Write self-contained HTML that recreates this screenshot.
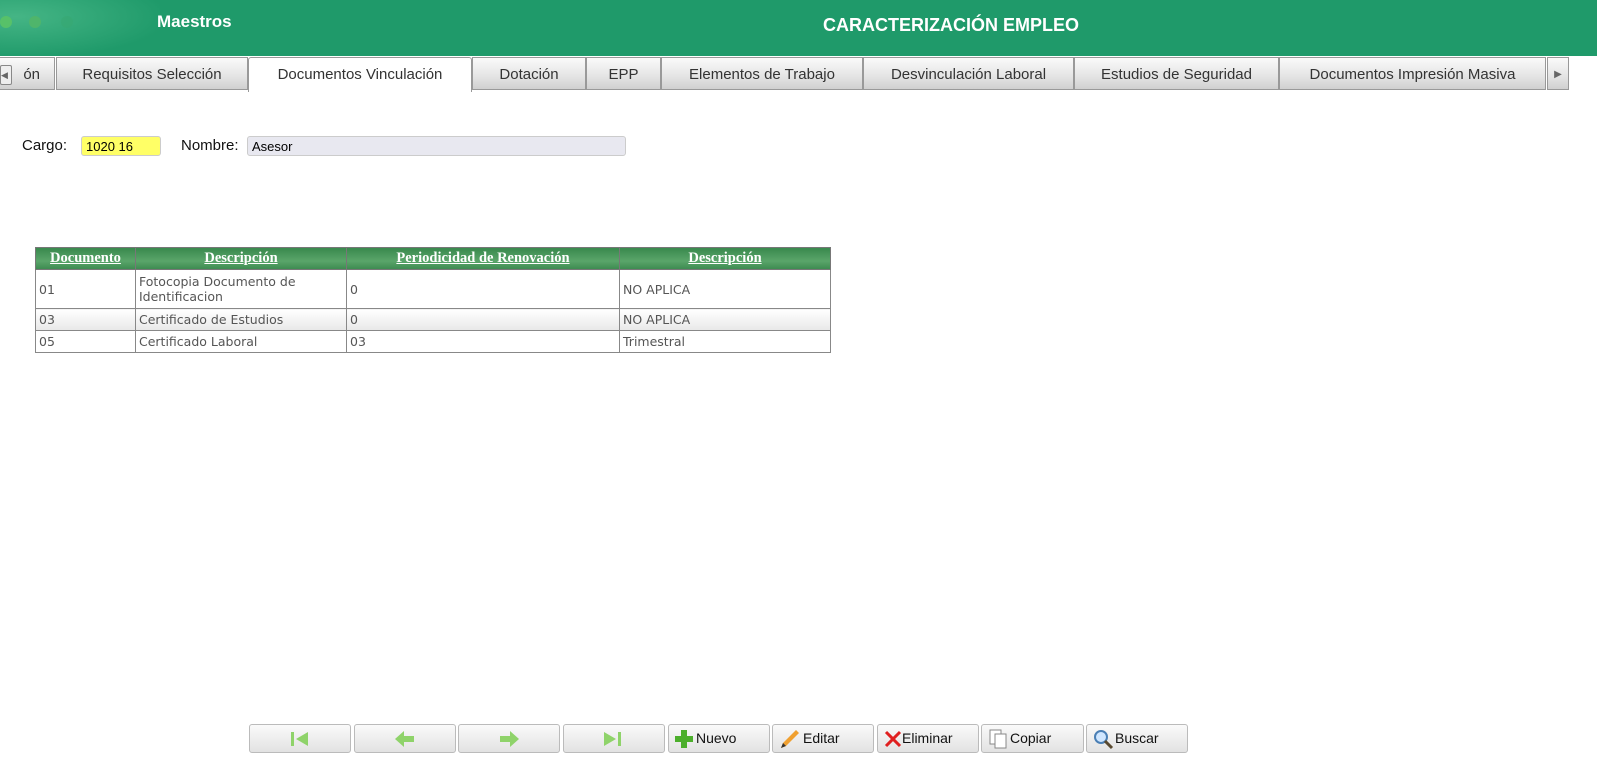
<!DOCTYPE html><html><head><meta charset="utf-8"><style>
body{margin:0;width:1597px;height:769px;background:#fff;font-family:"Liberation Sans",sans-serif;position:relative;overflow:hidden}
.hdr{position:absolute;left:0;top:0;width:1597px;height:56px;background:#1f9a6a}
.hdr .glow{position:absolute;left:0;top:0;width:160px;height:56px;background:radial-gradient(ellipse at 10% 30%,#45b585,#1f9a6a 75%)}
.dot{position:absolute;top:16px;width:12px;height:12px;border-radius:50%}
.t{position:absolute;color:#fff;font-weight:bold}
.tabs{position:absolute;top:57px;left:0;height:35px;width:1597px}
.tab{position:absolute;top:0;height:33px;border:1px solid #999;background:linear-gradient(#fafafa,#e4e4e4 60%,#d0d0d0);box-sizing:border-box;font-size:15px;color:#333;text-align:center;line-height:33px}
.tab.a{background:#fff;border-bottom:none;height:35px;border-radius:3px 3px 0 0}
.lbl{position:absolute;font-size:15px;color:#111}
.in{position:absolute;box-sizing:border-box;border:1px solid #ccc;border-radius:3px;font-size:13px;padding-left:4px;line-height:19px;height:20px}
table{position:absolute;left:35px;top:247px;border-collapse:collapse;width:796px;font-size:13px;color:#555;font-family:"DejaVu Sans",sans-serif}
th{background:linear-gradient(#3a8a4e,#5aa56a 60%,#3c8a50);color:#fff;text-decoration:underline;height:21px;font-size:13px;border:1px solid #777;padding:0;font-family:"Liberation Serif",serif;font-size:14.5px}
td{border:1px solid #888;padding:0 3px;height:21px;font-size:12.5px}
tr.g td{background:linear-gradient(#fff,#e8e8e8)}
.b{position:absolute;top:724px;height:29px;box-sizing:border-box;border:1px solid #bbb;border-radius:3px;background:linear-gradient(#fafafa,#e2e2e2);font-size:14px;color:#111;line-height:27px}
.b svg{position:absolute}
</style></head><body>
<div class="hdr"><div class="glow"></div>
<div class="dot" style="left:0;background:#57c169"></div><div class="dot" style="left:29px;background:#4fb56b"></div><div class="dot" style="left:61px;background:#38a874;opacity:.7"></div>
<div class="t" style="left:157px;top:12px;font-size:17px">Maestros</div>
<div class="t" style="left:823px;top:15px;font-size:18px">CARACTERIZACIÓN EMPLEO</div></div>
<div class="tabs">
<div class="tab" style="left:-2px;width:57px;text-align:right;padding-right:14px">ón</div>
<div style="position:absolute;left:0;top:8px;width:10px;height:18px;border:1px solid #888;border-radius:2px;background:#eee;font-size:9px;line-height:18px;color:#666">◀</div>
<div class="tab" style="left:56px;width:192px">Requisitos Selección</div>
<div class="tab a" style="left:248px;width:224px">Documentos Vinculación</div>
<div class="tab" style="left:472px;width:114px">Dotación</div>
<div class="tab" style="left:586px;width:75px">EPP</div>
<div class="tab" style="left:661px;width:202px">Elementos de Trabajo</div>
<div class="tab" style="left:863px;width:211px">Desvinculación Laboral</div>
<div class="tab" style="left:1074px;width:205px">Estudios de Seguridad</div>
<div class="tab" style="left:1279px;width:267px">Documentos Impresión Masiva</div>
<div class="tab" style="left:1547px;width:22px;font-size:10px;color:#666">▶</div>
</div>
<div class="lbl" style="left:22px;top:137px">Cargo:</div>
<div class="in" style="left:81px;top:136px;width:80px;background:#ffff66">1020 16</div>
<div class="lbl" style="left:181px;top:137px">Nombre:</div>
<div class="in" style="left:247px;top:136px;width:379px;background:#e8e8f0">Asesor</div>
<table>
<tr><th style="width:99px">Documento</th><th style="width:210px">Descripción</th><th style="width:272px">Periodicidad de Renovación</th><th>Descripción</th></tr>
<tr><td style="height:38px">01</td><td>Fotocopia Documento de Identificacion</td><td>0</td><td>NO APLICA</td></tr>
<tr class="g"><td>03</td><td>Certificado de Estudios</td><td>0</td><td>NO APLICA</td></tr>
<tr><td>05</td><td>Certificado Laboral</td><td>03</td><td>Trimestral</td></tr>
</table>
<div class="b" style="left:249px;width:102px"><svg style="left:40px;top:5px" width="20" height="18"><rect x="1" y="2" width="3" height="14" fill="#8fd36a"/><path d="M18 2L6 9L18 16Z" fill="#8fd36a"/></svg></div>
<div class="b" style="left:354px;width:102px"><svg style="left:38px;top:5px" width="24" height="18"><path d="M2 9L11 1V6H21V12H11V17Z" fill="#8fd36a"/></svg></div>
<div class="b" style="left:458px;width:102px"><svg style="left:38px;top:5px" width="24" height="18"><path d="M22 9L13 1V6H3V12H13V17Z" fill="#8fd36a"/></svg></div>
<div class="b" style="left:563px;width:102px"><svg style="left:38px;top:5px" width="20" height="18"><path d="M2 2L14 9L2 16Z" fill="#8fd36a"/><rect x="16" y="2" width="3" height="14" fill="#8fd36a"/></svg></div>
<div class="b" style="left:668px;width:102px;padding-left:27px"><svg style="left:4px;top:4px" width="22" height="20"><path d="M8 1H14V7H20V13H14V19H8V13H2V7H8Z" fill="#4caf2c"/></svg>Nuevo</div>
<div class="b" style="left:772px;width:102px;padding-left:30px"><svg style="left:5px;top:3px" width="22" height="22"><path d="M18 2L21 5L8 18L3 20L5 15Z" fill="#f0a030"/><path d="M3 20L5 15L8 18Z" fill="#333"/></svg>Editar</div>
<div class="b" style="left:877px;width:102px;padding-left:24px"><svg style="left:6px;top:5px" width="18" height="18"><path d="M2 2L16 16M16 2L2 16" stroke="#e02020" stroke-width="3"/></svg>Eliminar</div>
<div class="b" style="left:981px;width:103px;padding-left:28px"><svg style="left:7px;top:4px" width="20" height="20"><rect x="1" y="1" width="11" height="14" fill="#fff" stroke="#888"/><rect x="6" y="5" width="11" height="14" fill="#fff" stroke="#888"/></svg>Copiar</div>
<div class="b" style="left:1086px;width:102px;padding-left:28px"><svg style="left:5px;top:3px" width="22" height="22"><circle cx="9" cy="9" r="6" fill="#cfe6ff" stroke="#4a7fb5" stroke-width="2"/><path d="M13 13L20 20" stroke="#5a4a30" stroke-width="3"/></svg>Buscar</div>
</body></html>
